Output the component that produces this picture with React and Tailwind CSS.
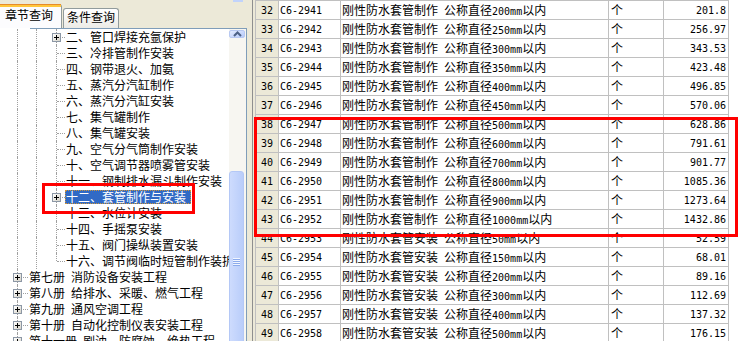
import React from "react";

const MONO = "font-['DejaVu_Sans_Mono',monospace] text-[10px]";

const treeItems = [
  { lvl: 3, text: "二、管口焊接充氩保护", plus: true },
  { lvl: 3, text: "三、冷排管制作安装" },
  { lvl: 3, text: "四、钢带退火、加氨" },
  { lvl: 3, text: "五、蒸汽分汽缸制作" },
  { lvl: 3, text: "六、蒸汽分汽缸安装" },
  { lvl: 3, text: "七、集气罐制作" },
  { lvl: 3, text: "八、集气罐安装" },
  { lvl: 3, text: "九、空气分气筒制作安装" },
  { lvl: 3, text: "十、空气调节器喷雾管安装" },
  { lvl: 3, text: "十一、钢制排水漏斗制作安装" },
  { lvl: 3, text: "十二、套管制作与安装", plus: true, sel: true },
  { lvl: 3, text: "十三、水位计安装" },
  { lvl: 3, text: "十四、手摇泵安装" },
  { lvl: 3, text: "十五、阀门操纵装置安装" },
  { lvl: 3, text: "十六、调节阀临时短管制作装拆", last: true },
  { lvl: 1, book: "第七册", text: "消防设备安装工程", plus: true },
  { lvl: 1, book: "第八册", text: "给排水、采暖、燃气工程", plus: true },
  { lvl: 1, book: "第九册", text: "通风空调工程", plus: true },
  { lvl: 1, book: "第十册", text: "自动化控制仪表安装工程", plus: true },
  { lvl: 1, book: "第十一册", text: "刷油、防腐蚀、绝热工程", plus: true },
];

const rows = [
  [32, "C6-2941", "制作", "200", "201.8"],
  [33, "C6-2942", "制作", "250", "256.97"],
  [34, "C6-2943", "制作", "300", "343.53"],
  [35, "C6-2944", "制作", "350", "423.48"],
  [36, "C6-2945", "制作", "400", "496.85"],
  [37, "C6-2946", "制作", "450", "570.06"],
  [38, "C6-2947", "制作", "500", "628.86"],
  [39, "C6-2948", "制作", "600", "791.61"],
  [40, "C6-2949", "制作", "700", "901.77"],
  [41, "C6-2950", "制作", "800", "1085.36"],
  [42, "C6-2951", "制作", "900", "1273.64"],
  [43, "C6-2952", "制作", "1000", "1432.86"],
  [44, "C6-2953", "安装", "50", "52.59"],
  [45, "C6-2954", "安装", "150", "68.01"],
  [46, "C6-2955", "安装", "200", "89.16"],
  [47, "C6-2956", "安装", "300", "112.69"],
  [48, "C6-2957", "安装", "400", "137.32"],
  [49, "C6-2958", "安装", "500", "176.15"],
];

function PlusBox({ className }) {
  return (
    <div className={`absolute top-[4px] w-[9px] h-[9px] border border-[#8c97a5] bg-gradient-to-br from-white to-[#d6d3c8] ${className}`}>
      <div className="absolute left-[1px] top-[3px] w-[5px] h-[1px] bg-black" />
      <div className="absolute left-[3px] top-[1px] w-[1px] h-[5px] bg-black" />
    </div>
  );
}

function TreeRow({ item }) {
  const top = item.lvl === 1;
  return (
    <div className={`relative h-4 flex items-center whitespace-nowrap ${top ? "pl-[29px]" : "pl-[66px]"}`}>
      <div className="absolute left-[17px] top-0 bottom-0 border-l border-dotted border-[#a0a0a0]" />
      {!top && <div className="absolute left-[36px] top-0 bottom-0 border-l border-dotted border-[#a0a0a0]" />}
      {!top && (
        <div className={`absolute left-[56px] top-0 border-l border-dotted border-[#a0a0a0] ${item.last ? "h-[8px]" : "bottom-0"}`} />
      )}
      <div className={`absolute top-[8px] border-t border-dotted border-[#a0a0a0] ${top ? "left-[18px] w-[10px]" : "left-[57px] w-[8px]"}`} />
      {item.plus && <PlusBox className={top ? "left-[13px]" : "left-[52px]"} />}
      {item.sel ? (
        <span className="-ml-[1px] pl-[1px] pr-[5px] h-[14px] leading-[14px] bg-[#316ac5] text-white outline-1 outline-dotted outline-[#ce953a] -outline-offset-1">
          {item.text}
        </span>
      ) : top ? (
        <span className="leading-4">
          {item.book}
          <span className="ml-[6px]">{item.text}</span>
        </span>
      ) : (
        <span className="leading-4">{item.text}</span>
      )}
    </div>
  );
}

function GridRow({ r }) {
  const [n, code, kind, d, price] = r;
  return (
    <div className="flex h-[19px] w-fit border-b border-l border-[#c0c0c0]">
      <div className="w-[23px] bg-[#ece9d8] border-r border-[#c0c0c0] flex items-center justify-center">
        <span className={MONO}>{n}</span>
      </div>
      <div className="w-[62px] border-r border-[#c0c0c0] pl-[1px] flex items-center">
        <span className={MONO}>{code}</span>
      </div>
      <div className="w-[268px] border-r border-[#c0c0c0] pl-[1px] flex items-center whitespace-nowrap overflow-hidden">
        <span>
          刚性防水套管{kind}
          <span className="ml-[6px]">公称直径</span>
          <span className={MONO}>{d}mm</span>以内
        </span>
      </div>
      <div className="w-[55px] border-r border-[#c0c0c0] pl-[2px] flex items-center">个</div>
      <div className="w-[65px] border-r border-[#c0c0c0] pr-[2px] flex items-center justify-end">
        <span className={MONO}>{price}</span>
      </div>
    </div>
  );
}

export default function App() {
  return (
    <div className="relative w-[748px] h-[341px] overflow-hidden flex bg-[#ece9d8] text-black text-[12px] font-['Noto_Sans_CJK_SC',sans-serif]">
      {/* left: chapter tree */}
      <div className="w-[247px] flex flex-col">
        <div className="h-[3px] flex">
          <div className="ml-[233px] w-[10px] h-[2px] bg-[#c1d3fb]" />
        </div>
        <div className="h-[25px] flex items-end">
          <div className="w-[62px] h-[24px] bg-[#fcfcfe] border-r border-[#919b9c] rounded-tr-[3px] flex flex-col">
            <div className="h-[1px] bg-[#e68b2c]" />
            <div className="h-[2px] bg-[#ffc73c]" />
            <div className="pl-[5px] leading-4">章节查询</div>
          </div>
          <div className="ml-[1px] w-[56px] h-[20px] border border-b-0 border-[#919b9c] rounded-t-[3px] bg-gradient-to-b from-white to-[#ecebe6] pl-[3px] leading-4">
            条件查询
          </div>
        </div>

        <div className="flex-1 flex flex-col bg-white border-r border-[#7f9db9] min-h-0">
          <div className="h-[1px] ml-[30px] bg-[#7f9db9]" />
          <div className="flex-1 flex min-h-0">
            <div className="w-[229px] overflow-hidden">
              {treeItems.map((it, i) => (
                <TreeRow key={i} item={it} />
              ))}
            </div>
            <div className="w-[17px] bg-[#f7f6f1] pt-[1px] flex flex-col">
              <div className="w-[16px] h-[15px] rounded-[2px] border border-[#b8c9f2] bg-gradient-to-br from-[#e3ebfe] to-[#b7cbfa] flex items-center justify-center">
                <svg width="9" height="6" viewBox="0 0 9 6">
                  <polyline points="1,5 4.5,1.5 8,5" fill="none" stroke="#4d6185" strokeWidth="2" />
                </svg>
              </div>
              <div className="h-[133px] shrink-0" />
              <div className="w-[15px] h-[181px] shrink-0 rounded-[3px] border border-[#b4c8f6] bg-gradient-to-r from-[#cddbfd] to-[#b9cdfa] flex flex-col items-center pt-[86px]">
                <div className="w-[7px] h-[2px] border-t border-b border-t-[#f0f5ff] border-b-[#8cabec]" />
                <div className="w-[7px] h-[2px] border-t border-b border-t-[#f0f5ff] border-b-[#8cabec]" />
                <div className="w-[7px] h-[2px] border-t border-b border-t-[#f0f5ff] border-b-[#8cabec]" />
                <div className="w-[7px] h-[2px] border-t border-b border-t-[#f0f5ff] border-b-[#8cabec]" />
              </div>
            </div>
          </div>
        </div>
      </div>

      {/* splitter */}
      <div className="w-[5px]" />

      {/* right: quota grid */}
      <div className="w-[496px] flex border-l border-[#8e8f8f] bg-white">
        <div className="w-[2px] bg-[#ece9d8]" />
        <div className="flex flex-col">
          <div className="flex h-[6px] w-fit border-b border-l border-[#c0c0c0]">
            <div className="w-[23px] bg-[#ece9d8] border-r border-[#c0c0c0]" />
            <div className="w-[62px] bg-[#efede2] border-r border-[#c0c0c0]" />
            <div className="w-[268px] bg-[#f4c56c] border-r border-[#c0c0c0]" />
            <div className="w-[55px] bg-[#ece9d8] border-r border-[#c0c0c0]" />
            <div className="w-[65px] bg-[#ece9d8] border-r border-[#c0c0c0]" />
          </div>
          {rows.map((r) => (
            <GridRow key={r[0]} r={r} />
          ))}
        </div>
      </div>

      {/* red highlight boxes */}
      <div className="absolute left-[42px] top-[183px] w-[153px] h-[31px] border-[3px] border-[#ff0000]" />
      <div className="absolute left-[254px] top-[117px] w-[484px] h-[120px] border-[3px] border-[#ff0000]" />
    </div>
  );
}
